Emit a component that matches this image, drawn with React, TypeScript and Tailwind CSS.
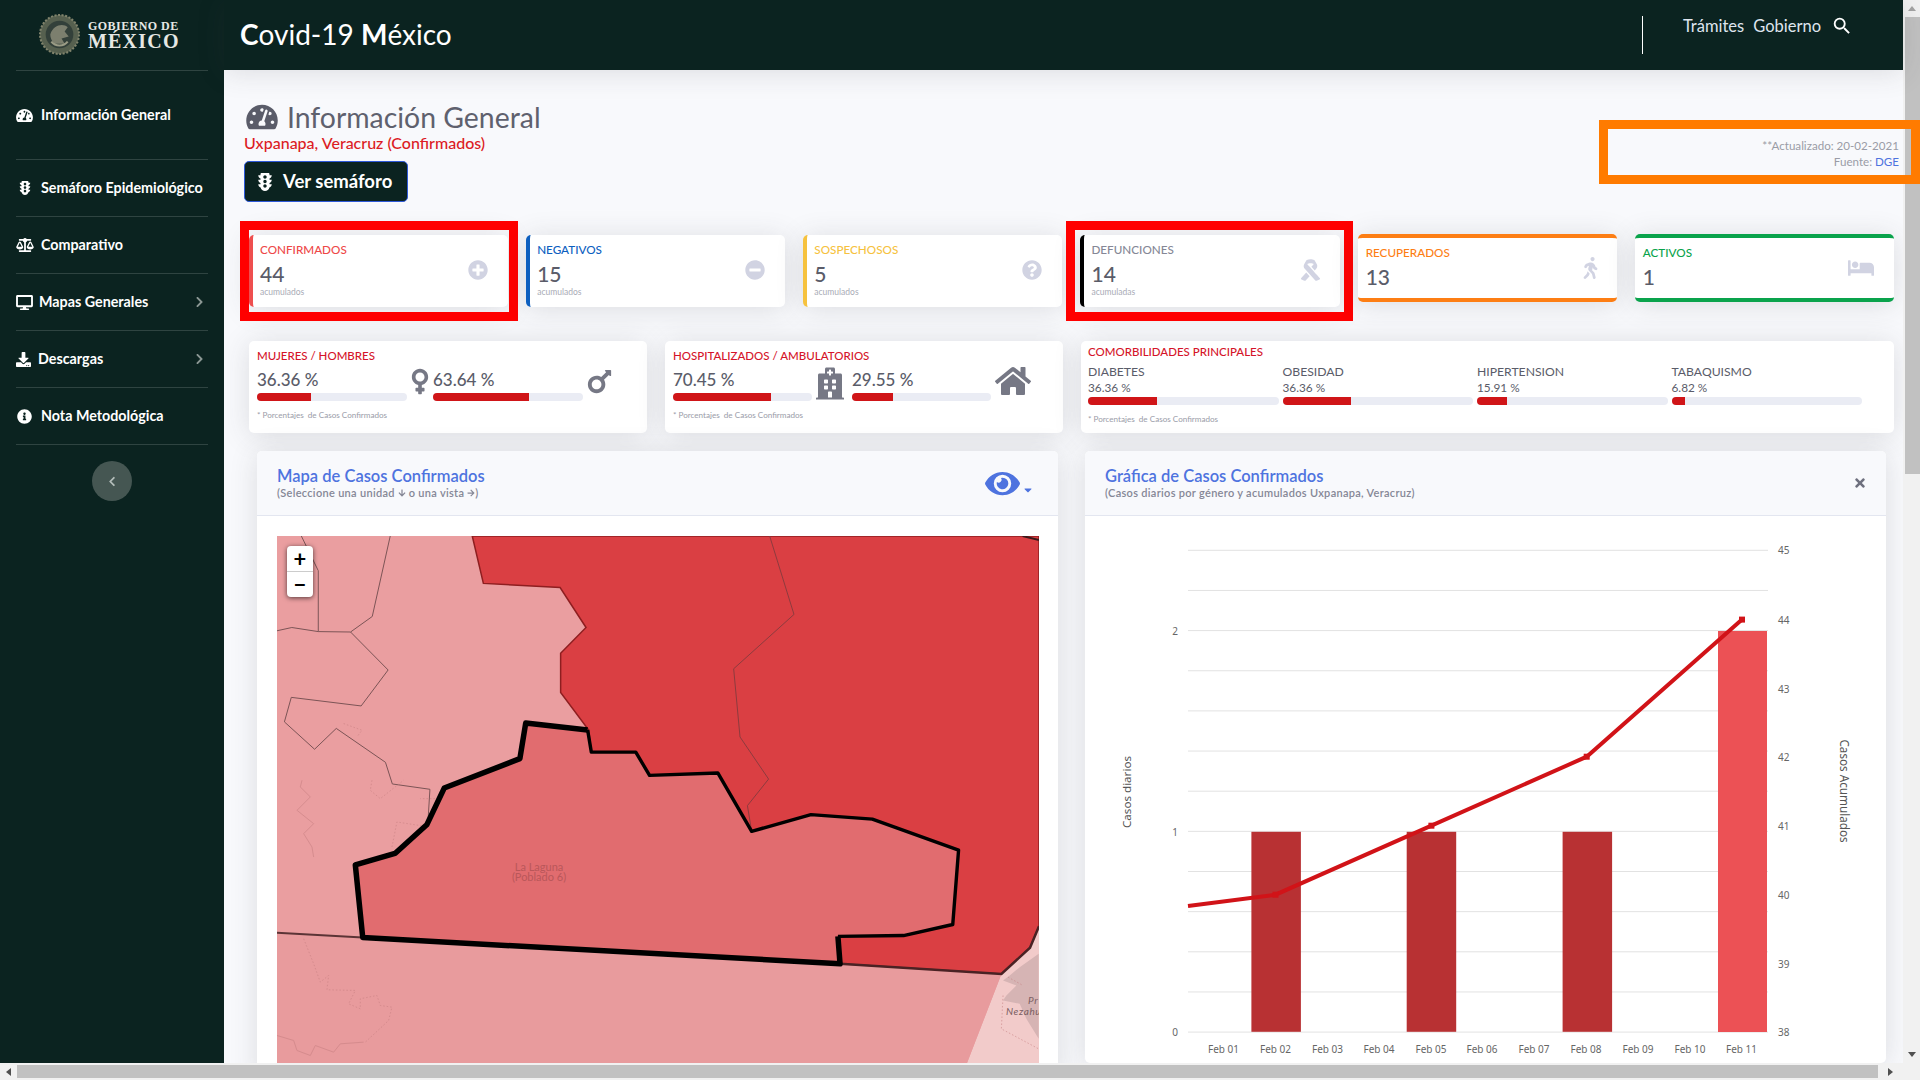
import React from "react";
import {
  FaTachometerAlt, FaTrafficLight, FaBalanceScale, FaDesktop, FaDownload, FaInfoCircle,
  FaChevronRight, FaChevronLeft, FaPlusCircle, FaMinusCircle, FaQuestionCircle, FaRibbon,
  FaWalking, FaBed, FaVenus, FaMars, FaHospital, FaHome, FaEye, FaCaretDown, FaTimes,
  FaArrowDown, FaArrowRight,
} from "react-icons/fa";
import { MdSearch } from "react-icons/md";

const Shadow = "shadow-[0_2.4px_28px_0_rgba(58,59,69,0.15)]";

function NavItem({ icon, label, first, arrow, gap }: { icon: React.ReactNode; label: string; first?: boolean; arrow?: boolean; gap: string }) {
  return (
    <div className={`mx-4 border-b border-[#2f4441] flex items-center ${first ? "h-[89px]" : "h-[57px]"}`}>
      <div className={`flex items-center flex-1 text-white text-[14.3px] font-bold ${gap}`}>
        {icon}
        <span>{label}</span>
      </div>
      {arrow && <FaChevronRight className="text-[#8b9794] w-[9px] h-[12px] mr-[4px]" />}
    </div>
  );
}

function Stat({ title, value, sub, color, titleColor, icon, box, band }: { title: string; value: string; sub?: string; color: string; titleColor: string; icon: React.ReactNode; box?: string; band?: boolean }) {
  return (
    <div className="relative">
      <div
        className={`bg-white rounded-[5px] flex items-center justify-between pr-5 ${Shadow} ${band ? "h-[68px] mt-[-1px] border-y-4 pl-2" : "h-[72px] border-l-4 pl-[7px]"} ${color}`}
      >
        <div className="self-start">
          <div className={`text-[11.7px] leading-[16px] mt-[6px] font-medium ${titleColor}`}>{title}</div>
          <div className="text-[21px] leading-[24px] mt-[5px] font-medium text-[#5a5c69]">{value}</div>
          {sub && <div className="text-[8.5px] leading-[12px] text-[#a9abb6]">{sub}</div>}
        </div>
        {icon}
      </div>
      {box && <div className={`absolute top-[-14px] bottom-[-14px] border-[9px] border-[#ff0000] ${box}`} />}
    </div>
  );
}

function Bar({ pct }: { pct: number }) {
  return (
    <div className="h-2 rounded-[5px] bg-[#eaecf4] overflow-hidden">
      <div className="h-full bg-[#d01518]" style={{ width: `${pct}%` }} />
    </div>
  );
}

function PctCol({ v, pct, w }: { v: string; pct: number; w: string }) {
  return (
    <div className={w}>
      <div className="text-[17px] leading-[24px] mt-1 font-medium text-[#5a5c69]">{v}</div>
      <div className="mt-px"><Bar pct={pct} /></div>
    </div>
  );
}

function Foot() {
  return <div className="text-[8.1px] leading-[12px] mt-2 text-[#9a9ca8] whitespace-pre">* Porcentajes  de Casos Confirmados</div>;
}

function Como({ l, v, pct }: { l: string; v: string; pct: number }) {
  return (
    <div>
      <div className="text-[12.2px] leading-[16px] text-[#5a5c69]">{l}</div>
      <div className="text-[11.8px] leading-[16px] text-[#5a5c69]">{v}</div>
      <div className="mt-px"><Bar pct={pct} /></div>
    </div>
  );
}

function MapSvg() {
  const thin = { fill: "none", stroke: "#7c5456", strokeWidth: 1, vectorEffect: "non-scaling-stroke" as const };
  const pale = { fill: "none", stroke: "#c77f81", strokeWidth: 1, opacity: 0.55, vectorEffect: "non-scaling-stroke" as const };
  const dot = { ...pale, strokeDasharray: "1.5 2" };
  const mid = "521,693 638,710 645,764 729,764 755,821 884,815 948,958 1060,917 1176,928 1339,1004 1328,1186 1235,1213 1111,1215 1115,1282 213,1218 199,1040 274,1012 334,942 367,852 510,780";
  return (
    <svg viewBox="51 235 1440 1290" preserveAspectRatio="none" className="block w-full h-full">
      <rect x="51" y="235" width="1440" height="1290" fill="#ea9ea0" />
      <polygon points="420,235 441,351 586,361 635,459 587,522 587,618 640,710 645,764 729,764 755,821 884,815 948,958 1060,917 1176,928 1339,1004 1328,1186 1235,1213 1111,1215 1115,1282 1420,1307 1474,1243 1491,1190 1491,235" fill="#da3f43" stroke="#8e1e20" strokeWidth={1.5} vectorEffect="non-scaling-stroke" />
      <polygon points="1420,1307 1474,1243 1491,1190 1491,1525 1355,1525" fill="#f2cbca" />
      <polygon points="51,1206 1420,1307 1355,1525 51,1525" fill="#e89b9d" />
      <polyline points="51,1206 213,1218" fill="none" stroke="#5b3436" strokeWidth={2} vectorEffect="non-scaling-stroke" />
      <polyline points="1115,1282 1420,1307 1474,1243 1491,1190" fill="none" stroke="#4a2224" strokeWidth={2.5} vectorEffect="non-scaling-stroke" />
      <polyline points="97,235 129,320 129,469" {...thin} />
      <polyline points="265,235 231,432 190,470 129,469 79,459 51,467" {...thin} />
      <polyline points="190,470 261,563 210,651 78,630 65,690 122,757 163,706 256,789 269,842 340,855 336,940" {...thin} />
      <polyline points="982,235 1028,427 914,560 926,727 980,830 940,895 948,958" fill="none" stroke="#8d3b3e" strokeWidth={1} vectorEffect="non-scaling-stroke" />
      <polyline points="1460,235 1491,245" fill="none" stroke="#3a1a1b" strokeWidth={2} vectorEffect="non-scaling-stroke" />
      <g transform="scale(1.889 2.45) translate(-250 -440) translate(277 700) scale(0.3333)">
        <path d="M75 240 L70 260 L100 290 L60 330 L110 370 L80 400 L105 440 L110 470" {...pale} />
        <path d="M80 715 L110 790 L130 845 L155 825 L150 868 L235 870 L215 910 L250 925 L250 895 L300 885 L310 915 L345 920 L335 960 L265 1025" {...dot} />
        <path d="M0 1005 L50 1020 L60 1050 L100 1065 L115 1035 L170 1055 L190 1030 L260 1025" {...pale} />
        <path d="M285 240 L280 270 L310 295 L380 240" {...dot} />
        <path d="M345 440 L360 365 L490 385 L480 295 L430 295" {...dot} />
        <path d="M200 70 L255 90 L240 110" {...dot} />
      </g>
      <polygon points={mid} fill="#e16c6f" />
      <polyline points="638,710 521,693 510,780 367,852 334,942 274,1012 199,1040 213,1218 1115,1282 1111,1215" fill="none" stroke="#000" strokeWidth={5.5} strokeLinejoin="round" vectorEffect="non-scaling-stroke" />
      <polyline points="638,710 645,764 729,764 755,821 884,815 948,958 1060,917 1176,928 1339,1004 1328,1186 1235,1213 1111,1215" fill="none" stroke="#000" strokeWidth={3.4} strokeLinejoin="round" vectorEffect="non-scaling-stroke" />
      <g transform="scale(1.889 2.45) translate(-250 -440) translate(940 940) scale(0.3333)">
        <polygon points="297,40 240,80 210,105 190,120 230,135 200,165 190,180 240,190 260,235 297,295" fill="#d6b4b4" />
        <path d="M205 110 L250 135 M190 165 L185 265 L297 325" {...dot} />
      </g>
    </svg>
  );
}

function ChartSvg() {
  const grid = Array.from({ length: 13 }, (_, i) => 550.3 + i * 40.15);
  const right: [string, number][] = [["45", 550], ["44", 620], ["43", 689], ["42", 757], ["41", 826], ["40", 895], ["39", 964], ["38", 1032]];
  const left: [string, number][] = [["2", 631], ["1", 832], ["0", 1032]];
  const xs = [1223.5, 1275.5, 1327.5, 1379, 1431, 1482, 1534, 1586, 1638, 1690, 1741.5];
  const dark = [1251.4, 1406.7, 1562.6];
  const pts: [number, number][] = [[1275.5, 894.7], [1431.4, 825.7], [1586.7, 756.7], [1742, 619.6]];
  return (
    <svg viewBox="1085 516 801 547" width={801} height={547} className="block" fontFamily="'Noto Sans', sans-serif">
      {grid.map((y) => <line key={y} x1={1188} x2={1768} y1={y} y2={y} stroke="#e2e2e2" strokeWidth={1} />)}
      {dark.map((x) => <rect key={x} x={x} y={831.8} width={49.5} height={200} fill="#b83133" />)}
      <rect x={1718} y={631} width={49} height={401} fill="#ec5155" />
      <polyline points="1188,906 1275.5,894.7 1431.4,825.7 1586.7,756.7 1742,619.6" fill="none" stroke="#d11318" strokeWidth={4} />
      {pts.map(([x, y]) => <rect key={x} x={x - 3} y={y - 3} width={6} height={6} fill="#d11318" />)}
      {left.map(([t, y]) => <text key={t} x={1178} y={y + 3.5} fontSize={10} textAnchor="end" fill="#666">{t}</text>)}
      {right.map(([t, y]) => <text key={t} x={1778} y={y + 3.5} fontSize={10} fill="#666">{t}</text>)}
      {xs.map((x, i) => <text key={x} x={x} y={1052.5} fontSize={10} textAnchor="middle" fill="#666">{`Feb ${String(i + 1).padStart(2, "0")}`}</text>)}
      <text transform="translate(1130.5 792) rotate(-90)" textAnchor="middle" fontSize={11.6} fill="#555">Casos diarios</text>
      <text transform="translate(1840 791) rotate(90)" textAnchor="middle" fontSize={11.7} fill="#555">Casos Acumulados</text>
    </svg>
  );
}

function CardHeader({ title, sub, right }: { title: string; sub: React.ReactNode; right: React.ReactNode }) {
  return (
    <div className="h-[65px] bg-[#f8f9fc] border-b border-[#e3e6f0] rounded-t-[5px] pl-5 flex items-center justify-between">
      <div className="-mt-[2px]">
        <div className="text-[16.5px] leading-[20px] font-semibold text-[#4e73df]">{title}</div>
        <div className="mt-px text-[11px] tracking-[0.3px] leading-[12px] font-semibold text-[#858796] flex items-center gap-[3px]">{sub}</div>
      </div>
      {right}
    </div>
  );
}

export default function App() {
  return (
    <div className="relative w-[1920px] h-[1080px] overflow-hidden bg-[#f1f1f1] font-['Lato','Noto_Sans',sans-serif]">
      <div className="flex h-[1063px]">
        {/* Sidebar */}
        <aside className="w-[224px] shrink-0 bg-[#0b2320]">
          <div className="mx-4 h-[71px] border-b border-[#2f4441] flex items-center pl-[23px] pb-[2px]">
            <svg viewBox="0 0 40 40" className="w-[41px] h-[41px] shrink-0">
              <circle cx="20" cy="20" r="19" fill="#56604f" />
              <circle cx="20" cy="20" r="19" fill="none" stroke="#80836c" strokeWidth="2" strokeDasharray="2 1.5" />
              <circle cx="20" cy="20" r="13.5" fill="#33403a" />
              <path d="M11 20 C14 10 24 9 28 13 L25 17 L29 22 L22 24 L25 29 L15 29 C12 26 11 23 11 20Z" fill="#7c7f6e" />
              <path d="M12 27 C16 32 24 32 28 27" fill="none" stroke="#9a9b85" strokeWidth="2" />
            </svg>
            <div className="ml-[8px] mt-[2px] font-['Liberation_Serif',serif] font-bold text-[#e6e8e4] leading-none">
              <div className="text-[12px] tracking-[0.45px] leading-[12px]">GOBIERNO DE</div>
              <div className="text-[20px] tracking-[1.2px] leading-[19px]">MÉXICO</div>
            </div>
          </div>
          <NavItem first gap="gap-2" icon={<FaTachometerAlt className="w-[17px] h-[15px] text-white" />} label="Información General" />
          <NavItem gap="gap-[9px]" icon={<FaTrafficLight className="w-[12px] h-[14px] ml-[3px] mr-[1px] text-white" />} label="Semáforo Epidemiológico" />
          <NavItem gap="gap-[7px]" icon={<FaBalanceScale className="w-[18px] h-[14px] text-white" />} label="Comparativo" />
          <NavItem arrow gap="gap-[6px]" icon={<FaDesktop className="w-[17px] h-[15px] text-white" />} label="Mapas Generales" />
          <NavItem arrow gap="gap-[7px]" icon={<FaDownload className="w-[15px] h-[15px] text-white" />} label="Descargas" />
          <NavItem gap="gap-[9px]" icon={<FaInfoCircle className="w-[15px] h-[15px] ml-[1px] text-white" />} label="Nota Metodológica" />
          <div className="mt-4 mx-auto w-10 h-10 rounded-full bg-[#455652] flex items-center justify-center">
            <FaChevronLeft className="w-[8px] h-[11px] text-[#b4bdba]" />
          </div>
        </aside>

        {/* Main column */}
        <div className="w-[1679px] shrink-0 flex flex-col">
          <header className={`relative z-10 h-[70px] shrink-0 bg-[#0b2320] flex items-start ${Shadow}`}>
            <div className="pl-4 mt-[14px] text-[28px] leading-[40px] text-white">
              <span className="font-bold">C</span>ovid-19 <span className="font-bold">M</span>éxico
            </div>
            <div className="ml-auto mt-4 h-[38px] w-px bg-white" />
            <div className="ml-[40px] mt-[15px] flex items-center text-[16.5px] leading-[22px] text-[#dfe5ee]">
              <span>Trámites</span>
              <span className="ml-[9px]">Gobierno</span>
              <MdSearch className="ml-[10px] w-[22px] h-[22px] text-white" />
            </div>
            <div className="w-[50px]" />
          </header>

          <main className="flex-1 overflow-hidden bg-[#f8f9fc] pl-5">
            <div className="mt-[30px] h-[34px] flex items-center">
              <FaTachometerAlt className="w-[32px] h-[28px] ml-[2px] text-[#5a5c69]" />
              <h1 className="ml-[9px] text-[28.4px] leading-[34px] font-normal text-[#5f616e]">Información General</h1>
            </div>
            <div className="h-[20px] -mt-px text-[16px] leading-[20px] font-medium text-[#dc1c24]">Uxpanapa, Veracruz (Confirmados)</div>
            <button className="mt-2 w-[164px] h-[41px] flex items-center rounded-[5px] bg-[#0b2320] border border-[#2e59d9] text-white text-[18.5px] font-bold pl-3 gap-[10px]">
              <FaTrafficLight className="w-[16px] h-[18px]" />
              <span>Ver semáforo</span>
            </button>

            <div className="mt-[33px] ml-[5px] w-[1645px] grid grid-cols-6 gap-[18px] items-start">
              <Stat box="left-[-9px] right-[-10px]" title="CONFIRMADOS" value="44" sub="acumulados" color="border-[#ee4f4f]" titleColor="text-[#ee4848]" icon={<FaPlusCircle className="w-5 h-5 text-[#d1d3e2] mb-[3px]" />} />
              <Stat title="NEGATIVOS" value="15" sub="acumulados" color="border-[#0d5fbf]" titleColor="text-[#0d5fbf]" icon={<FaMinusCircle className="w-5 h-5 text-[#d1d3e2] mb-[3px]" />} />
              <Stat title="SOSPECHOSOS" value="5" sub="acumulados" color="border-[#f6c23e]" titleColor="text-[#f6c23e]" icon={<FaQuestionCircle className="w-5 h-5 text-[#d1d3e2] mb-[3px]" />} />
              <Stat box="left-[-14px] right-[-13px]" title="DEFUNCIONES" value="14" sub="acumuladas" color="border-black" titleColor="text-[#858796]" icon={<FaRibbon className="w-[19px] h-[24px] text-[#d1d3e2] mb-[3px]" />} />
              <Stat band title="RECUPERADOS" value="13" color="border-[#fd7e14]" titleColor="text-[#fd7e14]" icon={<FaWalking className="w-[15px] h-[22px] text-[#d1d3e2] mr-[-1px] mb-[1px]" />} />
              <Stat band title="ACTIVOS" value="1" color="border-[#0aa34c]" titleColor="text-[#0aa34c]" icon={<FaBed className="w-[26px] h-[22px] text-[#d1d3e2] mb-[1px]" />} />
            </div>

            <div className="mt-[34px] ml-[5px] w-[1645px] flex gap-[18px] items-start">
              <div className={`w-[398px] h-[92px] bg-white rounded-[5px] px-2 pt-[7px] ${Shadow}`}>
                <div className="text-[11.5px] leading-[16px] font-medium text-[#d5142a]">MUJERES / HOMBRES</div>
                <div className="flex items-start gap-1">
                  <PctCol v="36.36 %" pct={36} w="w-[150px]" />
                  <FaVenus className="w-[18px] h-[29px] mt-[3px] text-[#767885]" />
                  <PctCol v="63.64 %" pct={64} w="w-[150px]" />
                  <FaMars className="w-[25px] h-[31px] mt-[2px] text-[#767885]" />
                </div>
                <Foot />
              </div>
              <div className={`w-[398px] h-[92px] bg-white rounded-[5px] px-2 pt-[7px] ${Shadow}`}>
                <div className="text-[11.5px] leading-[16px] font-medium text-[#d5142a]">HOSPITALIZADOS / AMBULATORIOS</div>
                <div className="flex items-start">
                  <PctCol v="70.45 %" pct={70.5} w="w-[139px]" />
                  <FaHospital className="w-[28px] h-[33px] ml-1 mr-2 mt-[3px] text-[#767885]" />
                  <PctCol v="29.55 %" pct={29.5} w="w-[139px]" />
                  <FaHome className="w-[36px] h-[32px] ml-1 mt-[1px] text-[#767885]" />
                </div>
                <Foot />
              </div>
              <div className={`w-[813px] h-[92px] bg-white rounded-[5px] px-[7px] pt-[3px] ${Shadow}`}>
                <div className="text-[11.5px] leading-[16px] font-medium text-[#d5142a]">COMORBILIDADES PRINCIPALES</div>
                <div className="mt-1 w-[774px] grid grid-cols-4 gap-1">
                  <Como l="DIABETES" v="36.36 %" pct={36} />
                  <Como l="OBESIDAD" v="36.36 %" pct={36} />
                  <Como l="HIPERTENSION" v="15.91 %" pct={16} />
                  <Como l="TABAQUISMO" v="6.82 %" pct={7} />
                </div>
                <Foot />
              </div>
            </div>

            <div className="mt-[18px] ml-[13px] flex gap-[27px] items-start">
              <section className={`w-[801px] bg-white rounded-[5px] ${Shadow}`}>
                <CardHeader
                  title="Mapa de Casos Confirmados"
                  sub={<><span>(Seleccione una unidad</span><FaArrowDown className="w-[8px] h-[8px]" /><span>o una vista</span><FaArrowRight className="w-[8px] h-[8px]" /><span className="-ml-[3px]">)</span></>}
                  right={
                    <div className="flex items-end pr-[25px]">
                      <FaEye className="w-[37px] h-[31px] text-[#4e73df]" />
                      <FaCaretDown className="w-[10px] h-[12px] ml-[2px] mb-[3px] text-[#4e73df]" />
                    </div>
                  }
                />
                <div className="pt-5 pl-5 pr-[19px] pb-5">
                  <div className="relative h-[527px] overflow-hidden">
                    <MapSvg />
                    <div className="absolute left-[10px] top-[10px] w-[26px] bg-white rounded-[4px] shadow-[0_1px_5px_rgba(0,0,0,0.65)] text-black font-bold">
                      <div className="h-[26px] border-b border-[#cccccc] flex items-center justify-center text-[22px] leading-none">+</div>
                      <div className="h-[25px] flex items-center justify-center text-[22px] leading-none">−</div>
                    </div>
                    <div className="absolute left-[240px] top-[326px] w-[44px] text-[11px] leading-[10px] text-[#b9575a] whitespace-nowrap flex flex-col items-center">
                      <span>La Laguna</span>
                      <span>(Poblado 6)</span>
                    </div>
                    <div className="absolute left-[729px] top-[459px] text-[10px] leading-[11px] italic tracking-[0.6px] text-[#7a5e62] whitespace-nowrap">
                      <div className="pl-[22px]">Pr</div>
                      <div>Nezahu</div>
                    </div>
                  </div>
                </div>
              </section>
              <section className={`w-[801px] bg-white rounded-[5px] ${Shadow}`}>
                <CardHeader
                  title="Gráfica de Casos Confirmados"
                  sub={<span>(Casos diarios por género y acumulados Uxpanapa, Veracruz)</span>}
                  right={<FaTimes className="w-[12px] h-[14px] mr-[20px] text-[#6e707e]" />}
                />
                <ChartSvg />
              </section>
            </div>
          </main>
        </div>

        {/* Vertical scrollbar */}
        <div className="w-[17px] shrink-0 bg-[#f1f1f1] flex flex-col items-end relative">
          <div className="h-[17px] w-full flex items-center justify-center">
            <svg viewBox="0 0 8 5" className="w-[8px] h-[5px]"><polygon points="4,0 8,5 0,5" fill="#a3a3a3" /></svg>
          </div>
          <div className="w-[15px] h-[457px] bg-[#c1c1c1]" />
          <div className="mt-auto h-[17px] w-full flex items-center justify-center">
            <svg viewBox="0 0 8 5" className="w-[8px] h-[5px]"><polygon points="0,0 8,0 4,5" fill="#505050" /></svg>
          </div>
        </div>
      </div>

      {/* Horizontal scrollbar */}
      <div className="h-[17px] bg-[#f1f1f1] flex items-center">
        <div className="w-[17px] h-full flex items-center justify-center">
          <svg viewBox="0 0 5 8" className="w-[5px] h-[8px]"><polygon points="5,0 5,8 0,4" fill="#505050" /></svg>
        </div>
        <div className="w-[1861px] h-[13px] bg-[#c1c1c1]" />
        <div className="w-[25px] h-full flex items-center justify-center">
          <svg viewBox="0 0 5 8" className="w-[5px] h-[8px]"><polygon points="0,0 5,4 0,8" fill="#505050" /></svg>
        </div>
      </div>

      {/* Annotation box + updated note */}
      <div className="absolute left-[1599px] top-[120px] w-[321px] h-[64px] border-[9px] border-[#ff7b00] pointer-events-none" />
      <div className="absolute right-[21px] top-[138px] text-right text-[11.6px] leading-[16px] text-[#9a9ca6]">
        <div>**Actualizado: 20-02-2021</div>
        <div>Fuente: <span className="text-[#4e73df]">DGE</span></div>
      </div>
    </div>
  );
}
